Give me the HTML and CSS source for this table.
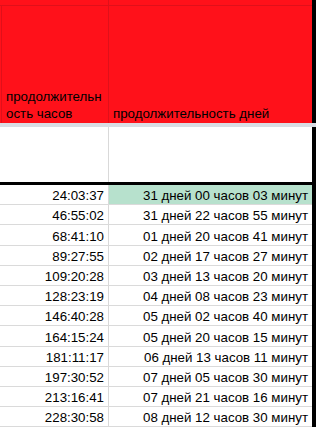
FILE: index.html
```html
<!DOCTYPE html>
<html lang="ru">
<head>
<meta charset="utf-8">
<title>Лист</title>
<link rel="stylesheet" href="styles.css">
</head>
<body>
<div class="sheet">
  <div class="row row-top">
    <div class="cell cell-a"></div>
    <div class="cell cell-b"></div>
    <div class="edge"></div>
  </div>
  <div class="row row-head">
    <div class="cell cell-a head-a">продолжительн<br>ость часов</div>
    <div class="cell cell-b">продолжительность дней</div>
    <div class="edge"></div>
  </div>
  <div class="strip"></div>
  <div class="row row-blank">
    <div class="cell cell-a"></div>
    <div class="cell cell-b"></div>
    <div class="edge"></div>
  </div>
  <div class="rule"></div>
  <div class="row row-data">
    <div class="cell cell-a">24:03:37</div>
    <div class="cell cell-b good">31 дней 00 часов 03 минут</div>
    <div class="edge"></div>
  </div>
  <div class="row row-data">
    <div class="cell cell-a">46:55:02</div>
    <div class="cell cell-b">31 дней 22 часов 55 минут</div>
    <div class="edge"></div>
  </div>
  <div class="row row-data">
    <div class="cell cell-a">68:41:10</div>
    <div class="cell cell-b">01 дней 20 часов 41 минут</div>
    <div class="edge"></div>
  </div>
  <div class="row row-data">
    <div class="cell cell-a">89:27:55</div>
    <div class="cell cell-b">02 дней 17 часов 27 минут</div>
    <div class="edge"></div>
  </div>
  <div class="row row-data">
    <div class="cell cell-a">109:20:28</div>
    <div class="cell cell-b">03 дней 13 часов 20 минут</div>
    <div class="edge"></div>
  </div>
  <div class="row row-data">
    <div class="cell cell-a">128:23:19</div>
    <div class="cell cell-b">04 дней 08 часов 23 минут</div>
    <div class="edge"></div>
  </div>
  <div class="row row-data">
    <div class="cell cell-a">146:40:28</div>
    <div class="cell cell-b">05 дней 02 часов 40 минут</div>
    <div class="edge"></div>
  </div>
  <div class="row row-data">
    <div class="cell cell-a">164:15:24</div>
    <div class="cell cell-b">05 дней 20 часов 15 минут</div>
    <div class="edge"></div>
  </div>
  <div class="row row-data">
    <div class="cell cell-a">181:11:17</div>
    <div class="cell cell-b">06 дней 13 часов 11 минут</div>
    <div class="edge"></div>
  </div>
  <div class="row row-data">
    <div class="cell cell-a">197:30:52</div>
    <div class="cell cell-b">07 дней 05 часов 30 минут</div>
    <div class="edge"></div>
  </div>
  <div class="row row-data">
    <div class="cell cell-a">213:16:41</div>
    <div class="cell cell-b">07 дней 21 часов 16 минут</div>
    <div class="edge"></div>
  </div>
  <div class="row row-data">
    <div class="cell cell-a">228:30:58</div>
    <div class="cell cell-b">08 дней 12 часов 30 минут</div>
    <div class="edge"></div>
  </div>
</div>
</body>
</html>
```
FILE: styles.css
```css
html, body {
  margin: 0;
  padding: 0;
  background: #ffffff;
}
body {
  width: 316px;
  height: 428px;
  overflow: hidden;
  font-family: "Liberation Sans", Arial, sans-serif;
  font-size: 13.3px;
  color: #000000;
}
.sheet {
  display: flex;
  flex-direction: column;
  width: 316px;
}
.row {
  display: flex;
  flex: none;
}
.cell {
  box-sizing: border-box;
  flex: none;
  display: flex;
  white-space: nowrap;
}
.cell-a {
  width: 109px;
  border-right: 1px solid #d9d9d9;
}
.cell-b {
  width: 203px;
}
.edge {
  width: 4px;
  flex: none;
  background: #000000;
}

/* top partial row */
.row-top {
  height: 6px;
}
.row-top .cell {
  background: #ff111a;
  border-bottom: 1px solid #e0101a;
}
.row-top .cell-a {
  border-right-color: #e0101a;
}

/* header row */
.row-head {
  height: 117px;
}
.row-head .cell {
  background: #ff111a;
  align-items: flex-end;
  line-height: 17px;
  padding: 0 4px 1px 4px;
}
.row-head .cell-a {
  border-right-color: #e0101a;
  padding-left: 6px;
  background: linear-gradient(to right, #ff111a 1px, #e0101a 1px, #e0101a 2px, #ff111a 2px);
}

.strip {
  height: 4px;
  background: #d9dde4;
}

.row-blank {
  height: 55px;
}

.rule {
  height: 3px;
  background: #000000;
}

.row-data {
  height: 20.2px;
}
.row-data .cell {
  border-bottom: 1px solid #dadada;
  justify-content: flex-end;
  align-items: flex-end;
  line-height: 15px;
  padding: 0 4px 1px 4px;
}
.row-data .cell-a {
  padding-right: 4px;
}
.good {
  background: #b7e1cd;
}
```
